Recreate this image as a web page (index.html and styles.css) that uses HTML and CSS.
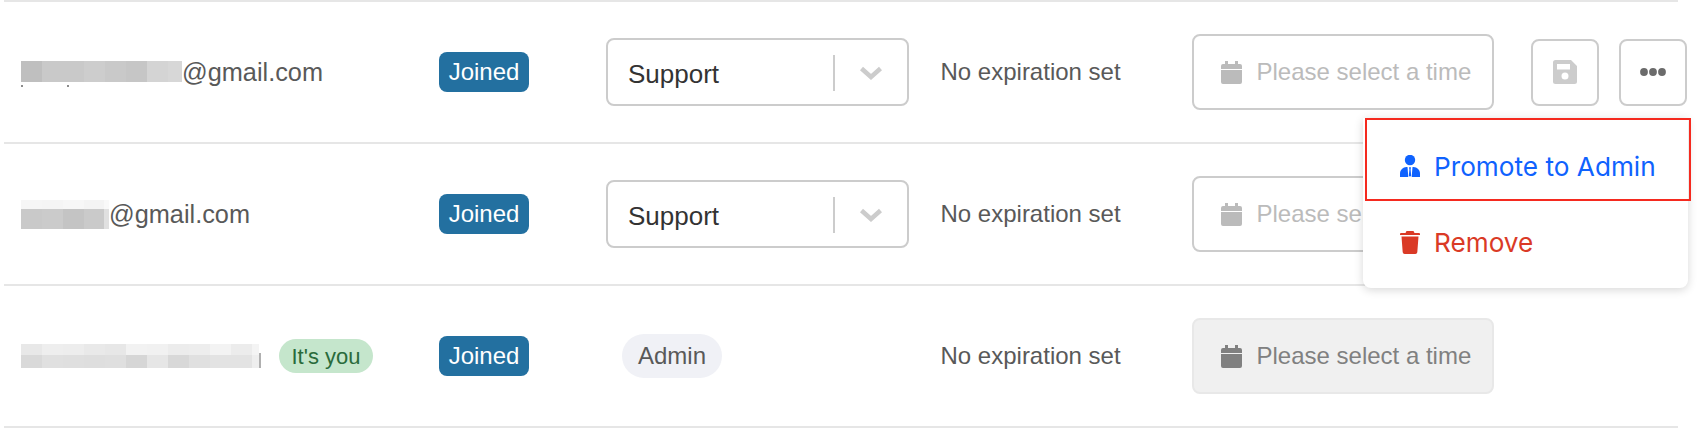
FILE: index.html
```html
<!DOCTYPE html>
<html lang="en">

<head>
    <meta charset="UTF-8">
    <meta name="viewport" content="width=device-width, initial-scale=1.0">
    <link rel="stylesheet" href="styles.css">

    <title>Members</title>
</head>

<body>

    <div class="member-list">

        <div class="member-row">
            <div class="member-email">
                <span class="mask mask-one"></span><span>@gmail.com</span>
            </div>
            <div><span class="status-badge">Joined</span></div>
            <div>
                <div class="role-select">
                    <span class="role-value">Support</span>
                    <span class="role-divider"></span>
                    <svg class="role-chevron" width="24" height="14" viewBox="0 0 24 14">
                        <path d="M2.5 2.5 12 11 21.5 2.5" fill="none" stroke="currentColor" stroke-width="4.5" />
                    </svg>
                </div>
            </div>
            <div class="expiry-text">No expiration set</div>
            <div>
                <div class="date-input">
                    <svg class="date-icon" width="21" height="23" viewBox="0 0 21 23">
                        <path fill="currentColor" d="M4 0h3v3h7V0h3v3h2a2 2 0 0 1 2 2v3H0V5a2 2 0 0 1 2-2h2zM0 9h21v12a2 2 0 0 1-2 2H2a2 2 0 0 1-2-2z" />
                    </svg>
                    <span>Please select a time</span>
                </div>
            </div>
            <div class="member-actions">
                <button class="icon-button" type="button">
                    <svg width="24" height="24" viewBox="0 0 24 24">
                        <path fill="#cccccc" fill-rule="evenodd" d="M2.500 0H18l6 6v15.500a2.500 2.500 0 0 1-2.500 2.500h-19A2.500 2.500 0 0 1 0 21.500v-19A2.500 2.500 0 0 1 2.500 0zM4 4v5.500h13V4zM12 12.500a3.500 3.500 0 1 0 0 7 3.500 3.500 0 0 0 0-7z" />
                    </svg>
                </button>
                <button class="icon-button" type="button">
                    <svg width="26" height="8" viewBox="0 0 26 8">
                        <circle cx="4" cy="4" r="3.900" fill="#6b6b6b" />
                        <circle cx="13" cy="4" r="3.900" fill="#6b6b6b" />
                        <circle cx="22" cy="4" r="3.900" fill="#6b6b6b" />
                    </svg>
                </button>

                <div class="action-menu">
                    <div class="menu-item menu-promote">
                        <svg width="20" height="22" viewBox="0 0 20 22">
                            <circle cx="10" cy="5" r="5.200" fill="currentColor" />
                            <path fill="currentColor" d="M0 22v-3.500C0 15 3 12 6.500 12h7c3.500 0 6.500 3 6.500 6.500V22z" />
                            <path fill="#ffffff" d="M7.500 12h5l-.8 10H8.300z" />
                            <path fill="currentColor" d="M9 12.300h2l-.4 2.200.6 6.300-1.200 1-1.200-1 .6-6.300z" />
                        </svg>
                        <span>Promote to Admin</span>
                    </div>
                    <div class="menu-item menu-remove">
                        <svg width="20" height="23" viewBox="0 0 20 23">
                            <path fill="currentColor" d="M6.500 0h7l1 2H19a1 1 0 0 1 1 1v1H0V3a1 1 0 0 1 1-1h4.500zM1.500 5.500h17l-1.200 15.700a2 2 0 0 1-2 1.800H4.700a2 2 0 0 1-2-1.800z" />
                        </svg>
                        <span>Remove</span>
                    </div>
                </div>
            </div>
        </div>

        <div class="member-row">
            <div class="member-email">
                <span class="mask mask-two"></span><span>@gmail.com</span>
            </div>
            <div><span class="status-badge">Joined</span></div>
            <div>
                <div class="role-select">
                    <span class="role-value">Support</span>
                    <span class="role-divider"></span>
                    <svg class="role-chevron" width="24" height="14" viewBox="0 0 24 14">
                        <path d="M2.5 2.5 12 11 21.5 2.5" fill="none" stroke="currentColor" stroke-width="4.5" />
                    </svg>
                </div>
            </div>
            <div class="expiry-text">No expiration set</div>
            <div>
                <div class="date-input">
                    <svg class="date-icon" width="21" height="23" viewBox="0 0 21 23">
                        <path fill="currentColor" d="M4 0h3v3h7V0h3v3h2a2 2 0 0 1 2 2v3H0V5a2 2 0 0 1 2-2h2zM0 9h21v12a2 2 0 0 1-2 2H2a2 2 0 0 1-2-2z" />
                    </svg>
                    <span>Please select a time</span>
                </div>
            </div>
            <div></div>
        </div>

        <div class="member-row">
            <div class="member-email">
                <span class="mask mask-three"></span><span class="you-badge">It's you</span>
            </div>
            <div><span class="status-badge">Joined</span></div>
            <div class="role-cell"><span class="role-badge">Admin</span></div>
            <div class="expiry-text">No expiration set</div>
            <div>
                <div class="date-input date-disabled">
                    <svg class="date-icon" width="21" height="23" viewBox="0 0 21 23">
                        <path fill="currentColor" d="M4 0h3v3h7V0h3v3h2a2 2 0 0 1 2 2v3H0V5a2 2 0 0 1 2-2h2zM0 9h21v12a2 2 0 0 1-2 2H2a2 2 0 0 1-2-2z" />
                    </svg>
                    <span>Please select a time</span>
                </div>
            </div>
            <div></div>
        </div>

    </div>

</body>

</html>
```

FILE: styles.css
```css
body {
    margin: 0;
    background-color: #fff;
    font-family: "Liberation Sans", Arial, sans-serif;
    font-size: 24px;
    color: #595959;
}

.member-list {
    width: 1674px;
    margin-left: 4px;
    border-top: 2px solid #e6e6e6;
}

.member-row {
    display: grid;
    grid-template-columns: 418px 167px 334.500px 250px 340.500px 1fr;
    align-items: center;
    box-sizing: border-box;
    height: 142px;
    padding-left: 17px;
    border-bottom: 2px solid #e6e6e6;
}

.member-email {
    display: flex;
    align-items: center;
    font-size: 25.300px;
}

/* blurred part of the address */
.mask {
    display: block;
    flex-shrink: 0;
}

.mask-one {
    width: 161px;
    height: 27px;
    margin-top: 4px;
    background:
        linear-gradient(#8c8c8c, #8c8c8c) 0 24px / 2px 2px no-repeat,
        linear-gradient(#8c8c8c, #8c8c8c) 46px 24px / 2px 2px no-repeat,
        linear-gradient(to right,
            #bfbfbf 0 21px, #c9c9c9 21px 63px, #cdcdcd 63px 84px, #c9c9c9 84px 105px,
            #c6c6c6 105px 126px, #d4d4d4 126px 147px, #d7d7d7 147px 161px) 0 0 / 100% 21px no-repeat;
}

.mask-two {
    width: 88px;
    height: 29px;
    background:
        linear-gradient(to right,
            #f6f6f6 0 21px, #f5f5f5 21px 42px, #f7f7f7 42px 63px, #f4f4f4 63px 83px, #f9f9f9 83px 88px) 0 0 / 100% 9px no-repeat,
        linear-gradient(to right,
            #c9c9c9 0 21px, #cbcbcb 21px 42px, #c4c4c4 42px 63px, #cacaca 63px 83px, #e0e0e0 83px 88px) 0 9px / 100% 20px no-repeat;
}

.mask-three {
    width: 241px;
    height: 24px;
    margin-top: -1px;
    background:
        linear-gradient(#b0b0b0, #b0b0b0) 238px 9px / 2px 15px no-repeat,
        linear-gradient(to right,
            #e8e8e8 0 21px, #eeeeee 21px 42px, #ededed 42px 63px, #e9e9e9 63px 84px,
            #e7e7e7 84px 105px, #f2f2f2 105px 126px, #f1f1f1 126px 147px, #ececec 147px 168px,
            #ededed 168px 189px, #f3f3f3 189px 210px, #ececec 210px 231px, #f4f4f4 231px 238px) 0 0 / 238px 11px no-repeat,
        linear-gradient(to right,
            #d9d9d9 0 21px, #e0e0e0 21px 42px, #dfdfdf 42px 63px, #dedede 63px 84px,
            #dfdfdf 84px 105px, #d6d6d6 105px 126px, #e6e6e6 126px 147px, #d8d8d8 147px 168px,
            #e0e0e0 168px 189px, #e3e3e3 189px 231px, #eeeeee 231px 238px) 0 11px / 238px 13px no-repeat;
}

.you-badge {
    margin-left: 17px;
    padding: 0 12.500px;
    height: 34px;
    line-height: 36px;
    border-radius: 17px;
    background-color: #c5e6cc;
    color: #2a6b3b;
    font-size: 22px;
}

.status-badge {
    display: inline-block;
    width: 90px;
    height: 40px;
    line-height: 40px;
    text-align: center;
    border-radius: 8px;
    background-color: #2370a0;
    color: #fff;
    vertical-align: middle;
}

.role-select {
    display: flex;
    align-items: center;
    box-sizing: border-box;
    width: 303px;
    height: 68px;
    padding-left: 20px;
    border: 2px solid #cccccc;
    border-radius: 8px;
    background-color: #fff;
}

.role-value {
    width: 205px;
    font-size: 26px;
    color: #333;
    margin-top: 5px;
}

.role-divider {
    width: 2px;
    height: 36px;
    margin-top: 1px;
    background-color: #cccccc;
}

.role-chevron {
    margin-left: 24px;
    margin-top: 1px;
    color: #cccccc;
}

.role-cell {
    padding-left: 16px;
}

.role-badge {
    display: inline-block;
    width: 100px;
    height: 44px;
    line-height: 44px;
    text-align: center;
    border-radius: 22px;
    background-color: #f0f1f6;
    vertical-align: middle;
}

.date-input {
    display: flex;
    align-items: center;
    gap: 15px;
    box-sizing: border-box;
    width: 302px;
    height: 76px;
    margin-left: 1.500px;
    padding-left: 26.500px;
    border: 2px solid #cccccc;
    border-radius: 8px;
    background-color: #fff;
    color: #bbbbbb;
}

.date-disabled {
    border-color: #e8e8e8;
    background-color: #f0f0f0;
    color: #808080;
}

.member-actions {
    position: relative;
    display: flex;
    gap: 20px;
}

.icon-button {
    display: flex;
    align-items: center;
    justify-content: center;
    width: 68px;
    height: 67px;
    padding: 0;
    border: 2px solid #cccccc;
    border-radius: 8px;
    background-color: #fff;
}

.action-menu {
    position: absolute;
    top: 79px;
    right: -1px;
    z-index: 1;
    width: 325px;
    height: 170px;
    border-radius: 0 0 8px 8px;
    background-color: #fff;
    box-shadow: 0 2px 10px rgba(0, 0, 0, 0.16);
    font-family: Inter, "Liberation Sans", sans-serif;
    font-size: 26.200px;
}

.menu-item {
    display: flex;
    align-items: center;
    gap: 14px;
    box-sizing: border-box;
}

.menu-promote {
    height: 83px;
    margin: 0 -3px 0 2px;
    padding: 14px 0 0 33px;
    border: 2px solid #f52a1f;
    color: #0f62fe;
}

.menu-remove {
    height: 87px;
    padding: 0 0 3px 37px;
    color: #da3a26;
}
```
